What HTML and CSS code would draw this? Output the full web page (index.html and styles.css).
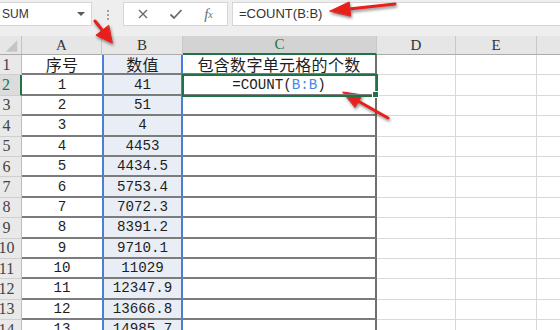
FILE: index.html
```html
<!DOCTYPE html>
<html lang="zh">
<head>
  <meta charset="UTF-8" />
  <title>COUNT</title>
  <link rel="stylesheet" href="styles.css">
</head>
<body>
  <!-- 編輯列 -->
  <div class="toolbar">
    <div class="namebox">
      <span>SUM</span>
      <svg class="caret" width="10" height="6" viewBox="0 0 10 6"><polygon points="1,1 9,1 5,5" fill="#5a5a5a"/></svg>
    </div>
    <div class="grip"><i></i><i></i><i></i></div>
    <div class="fnbox">
      <span class="fnbtn">
        <svg width="12" height="12" viewBox="0 0 12 12"><path d="M2 2 L10 10 M10 2 L2 10" stroke="#6b6b6b" stroke-width="1.4" fill="none"/></svg>
      </span>
      <span class="fnbtn">
        <svg width="14" height="12" viewBox="0 0 14 12"><path d="M1.5 6.5 L5 10 L12.5 2" stroke="#6b6b6b" stroke-width="1.8" fill="none"/></svg>
      </span>
      <span class="fnbtn fx"><i>f</i><sub>x</sub></span>
    </div>
    <div class="formula">=COUNT(B:B)</div>
  </div>

  <!-- 工作表 -->
  <div class="sheet">
    <div class="corner"><svg width="22" height="19" viewBox="0 0 22 19"><polygon points="6,16 18,16 18,4" fill="#c4c4c4"/></svg></div>
    <div class="ch">A</div><div class="ch">B</div><div class="ch active">C</div><div class="ch">D</div><div class="ch">E</div><div class="ch last"></div>

    <div class="rh">1</div><div class="a zh">序号</div><div class="b zh">数值</div><div class="c zh">包含数字单元格的个数</div><div class="d"></div><div class="e"></div><div class="f"></div>
    <div class="rh cur">2</div><div class="a">1</div><div class="b">41</div><div class="c sel">=COUNT(<span class="ref">B:B</span>)</div><div class="d"></div><div class="e"></div><div class="f"></div>
    <div class="rh">3</div><div class="a">2</div><div class="b">51</div><div class="c"></div><div class="d"></div><div class="e"></div><div class="f"></div>
    <div class="rh">4</div><div class="a">3</div><div class="b">4</div><div class="c"></div><div class="d"></div><div class="e"></div><div class="f"></div>
    <div class="rh">5</div><div class="a">4</div><div class="b">4453</div><div class="c"></div><div class="d"></div><div class="e"></div><div class="f"></div>
    <div class="rh">6</div><div class="a">5</div><div class="b">4434.5</div><div class="c"></div><div class="d"></div><div class="e"></div><div class="f"></div>
    <div class="rh">7</div><div class="a">6</div><div class="b">5753.4</div><div class="c"></div><div class="d"></div><div class="e"></div><div class="f"></div>
    <div class="rh">8</div><div class="a">7</div><div class="b">7072.3</div><div class="c"></div><div class="d"></div><div class="e"></div><div class="f"></div>
    <div class="rh">9</div><div class="a">8</div><div class="b">8391.2</div><div class="c"></div><div class="d"></div><div class="e"></div><div class="f"></div>
    <div class="rh">10</div><div class="a">9</div><div class="b">9710.1</div><div class="c"></div><div class="d"></div><div class="e"></div><div class="f"></div>
    <div class="rh">11</div><div class="a">10</div><div class="b">11029</div><div class="c"></div><div class="d"></div><div class="e"></div><div class="f"></div>
    <div class="rh">12</div><div class="a">11</div><div class="b">12347.9</div><div class="c"></div><div class="d"></div><div class="e"></div><div class="f"></div>
    <div class="rh">13</div><div class="a">12</div><div class="b">13666.8</div><div class="c"></div><div class="d"></div><div class="e"></div><div class="f"></div>
    <div class="rh">14</div><div class="a">13</div><div class="b">14985.7</div><div class="c"></div><div class="d"></div><div class="e"></div><div class="f"></div>
  </div>

  <!-- 紅色標註箭頭 -->
  <svg class="arrows" width="560" height="330" viewBox="0 0 560 330">
    <g fill="#e8201c" stroke="#e8201c" stroke-linecap="round">
      <line x1="395" y1="4" x2="349" y2="9" stroke-width="3"/>
      <polygon points="330,11 349.2,1.9 350.6,15.8" stroke-width="1"/>
      <line x1="95" y1="21" x2="102.5" y2="30.5" stroke-width="3"/>
      <polygon points="112,43 95.9,35.2 108.5,25.4" stroke-width="1"/>
      <line x1="388" y1="118" x2="358" y2="101" stroke-width="3"/>
      <polygon points="343,92 362.1,94.9 355.1,107.1" stroke-width="1"/>
    </g>
  </svg>
</body>
</html>
```

FILE: styles.css
```css
html, body {
  margin: 0; padding: 0;
}
body {
  width: 560px;
  height: 330px;
  overflow: hidden;
  background: #eeeeee;
  position: relative;
  font-family: "Liberation Sans", Arial, sans-serif;
}

/* 上方編輯列 */
.toolbar {
  display: flex;
  height: 28px;
  padding-top: 2px;
  box-sizing: border-box;
}
.namebox {
  width: 92px;
  height: 24px;
  box-sizing: border-box;
  background: #fff;
  border: 1px solid #d6d6d6;
  border-left: none;
  display: flex;
  align-items: center;
  justify-content: space-between;
  padding: 0 5px 0 2px;
  font-size: 12px;
  color: #333;
}
.grip {
  width: 31px;
  display: flex;
  flex-direction: column;
  align-items: center;
  justify-content: center;
  gap: 2px;
}
.grip i {
  width: 2px; height: 2px;
  background: #a0a0a0;
}
.fnbox {
  width: 105px;
  height: 24px;
  box-sizing: border-box;
  background: #fff;
  border: 1px solid #d6d6d6;
  display: flex;
  align-items: center;
  padding-left: 2px;
}
.fnbtn {
  width: 33px;
  display: flex;
  justify-content: center;
  align-items: center;
}
.fx {
  font-family: "Liberation Serif", serif;
  color: #6b6b6b;
  font-size: 15px;
}
.fx sub {
  font-size: 10px;
  font-style: italic;
  vertical-align: -1px;
}
.formula {
  flex: 1;
  margin-left: 4px;
  height: 24px;
  box-sizing: border-box;
  background: #fff;
  border: 1px solid #d6d6d6;
  border-right: none;
  padding-left: 6px;
  font-size: 13px;
  line-height: 22px;
  color: #333;
}

/* 工作表格線 */
.sheet {
  margin-top: 8px;
  display: grid;
  grid-template-columns: 22px 80px 81px 194px 79px 81px 1fr;
  grid-template-rows: 19px;
  grid-auto-rows: 20.4px;
  background: #fff;
}
.sheet > div {
  box-sizing: border-box;
  display: flex;
  align-items: center;
  justify-content: center;
  white-space: nowrap;
  font-family: "Liberation Mono", "Noto Sans CJK SC", monospace;
  font-size: 14.2px;
  color: #1e1e1e;
}
.sheet > .corner {
  background: #e6e6e6;
  border-right: 1px solid #c2c2c2;
  border-bottom: 1px solid #ababab;
}
.sheet > .ch {
  background: #e6e6e6;
  border-right: 1px solid #c8c8c8;
  border-bottom: 1px solid #ababab;
  font-family: "Liberation Serif", serif;
  font-size: 15px;
  color: #333;
}
.sheet > .ch.active {
  background: #d3d3d3;
  border-bottom: 2px solid #217346;
  color: #217346;
}
.sheet > .ch.last { border-right: none; }

.sheet > .rh {
  background: #e9e9e9;
  border-right: 1px solid #bdbdbd;
  border-bottom: 1px solid #cfcfcf;
  justify-content: center;
  padding-right: 8px;
  font-family: "Liberation Serif", serif;
  font-size: 16px;
  color: #444;
}
.sheet > .rh.cur {
  background: #dcdcdc;
  color: #217346;
  border-right: 2px solid #217346;
}

.sheet > .a {
  border-bottom: 2px solid #7c7c7c;
}
.sheet > .b {
  background: #e8edf6;
  border-left: 2px solid #4a7fd6;
  border-right: 2px solid #4a7fd6;
  border-bottom: 2px solid #7c7c7c;
}
.sheet > .c {
  border-right: 2px solid #6e6e6e;
  border-bottom: 2px solid #7c7c7c;
}
.sheet > .d, .sheet > .e {
  border-right: 1px solid #d9d9d9;
  border-bottom: 1px solid #d9d9d9;
}
.sheet > .f {
  border-bottom: 1px solid #d9d9d9;
}
.sheet > .zh {
  font-size: 16px;
  letter-spacing: 0.3px;
}

/* 作用中儲存格 */
.sheet > .sel {
  position: relative;
  z-index: 1;
  outline: 2px solid #217346;
  outline-offset: -1px;
}
.sel::after {
  content: "";
  position: absolute;
  right: -4px; bottom: -4px;
  width: 5px; height: 5px;
  background: #217346;
  border: 1px solid #fff;
}
.ref {
  color: #4a86e8;
}

.arrows {
  position: absolute;
  top: 0; left: 0;
  pointer-events: none;
  filter: drop-shadow(1px 2px 1.5px rgba(0,0,0,0.45));
}
```
